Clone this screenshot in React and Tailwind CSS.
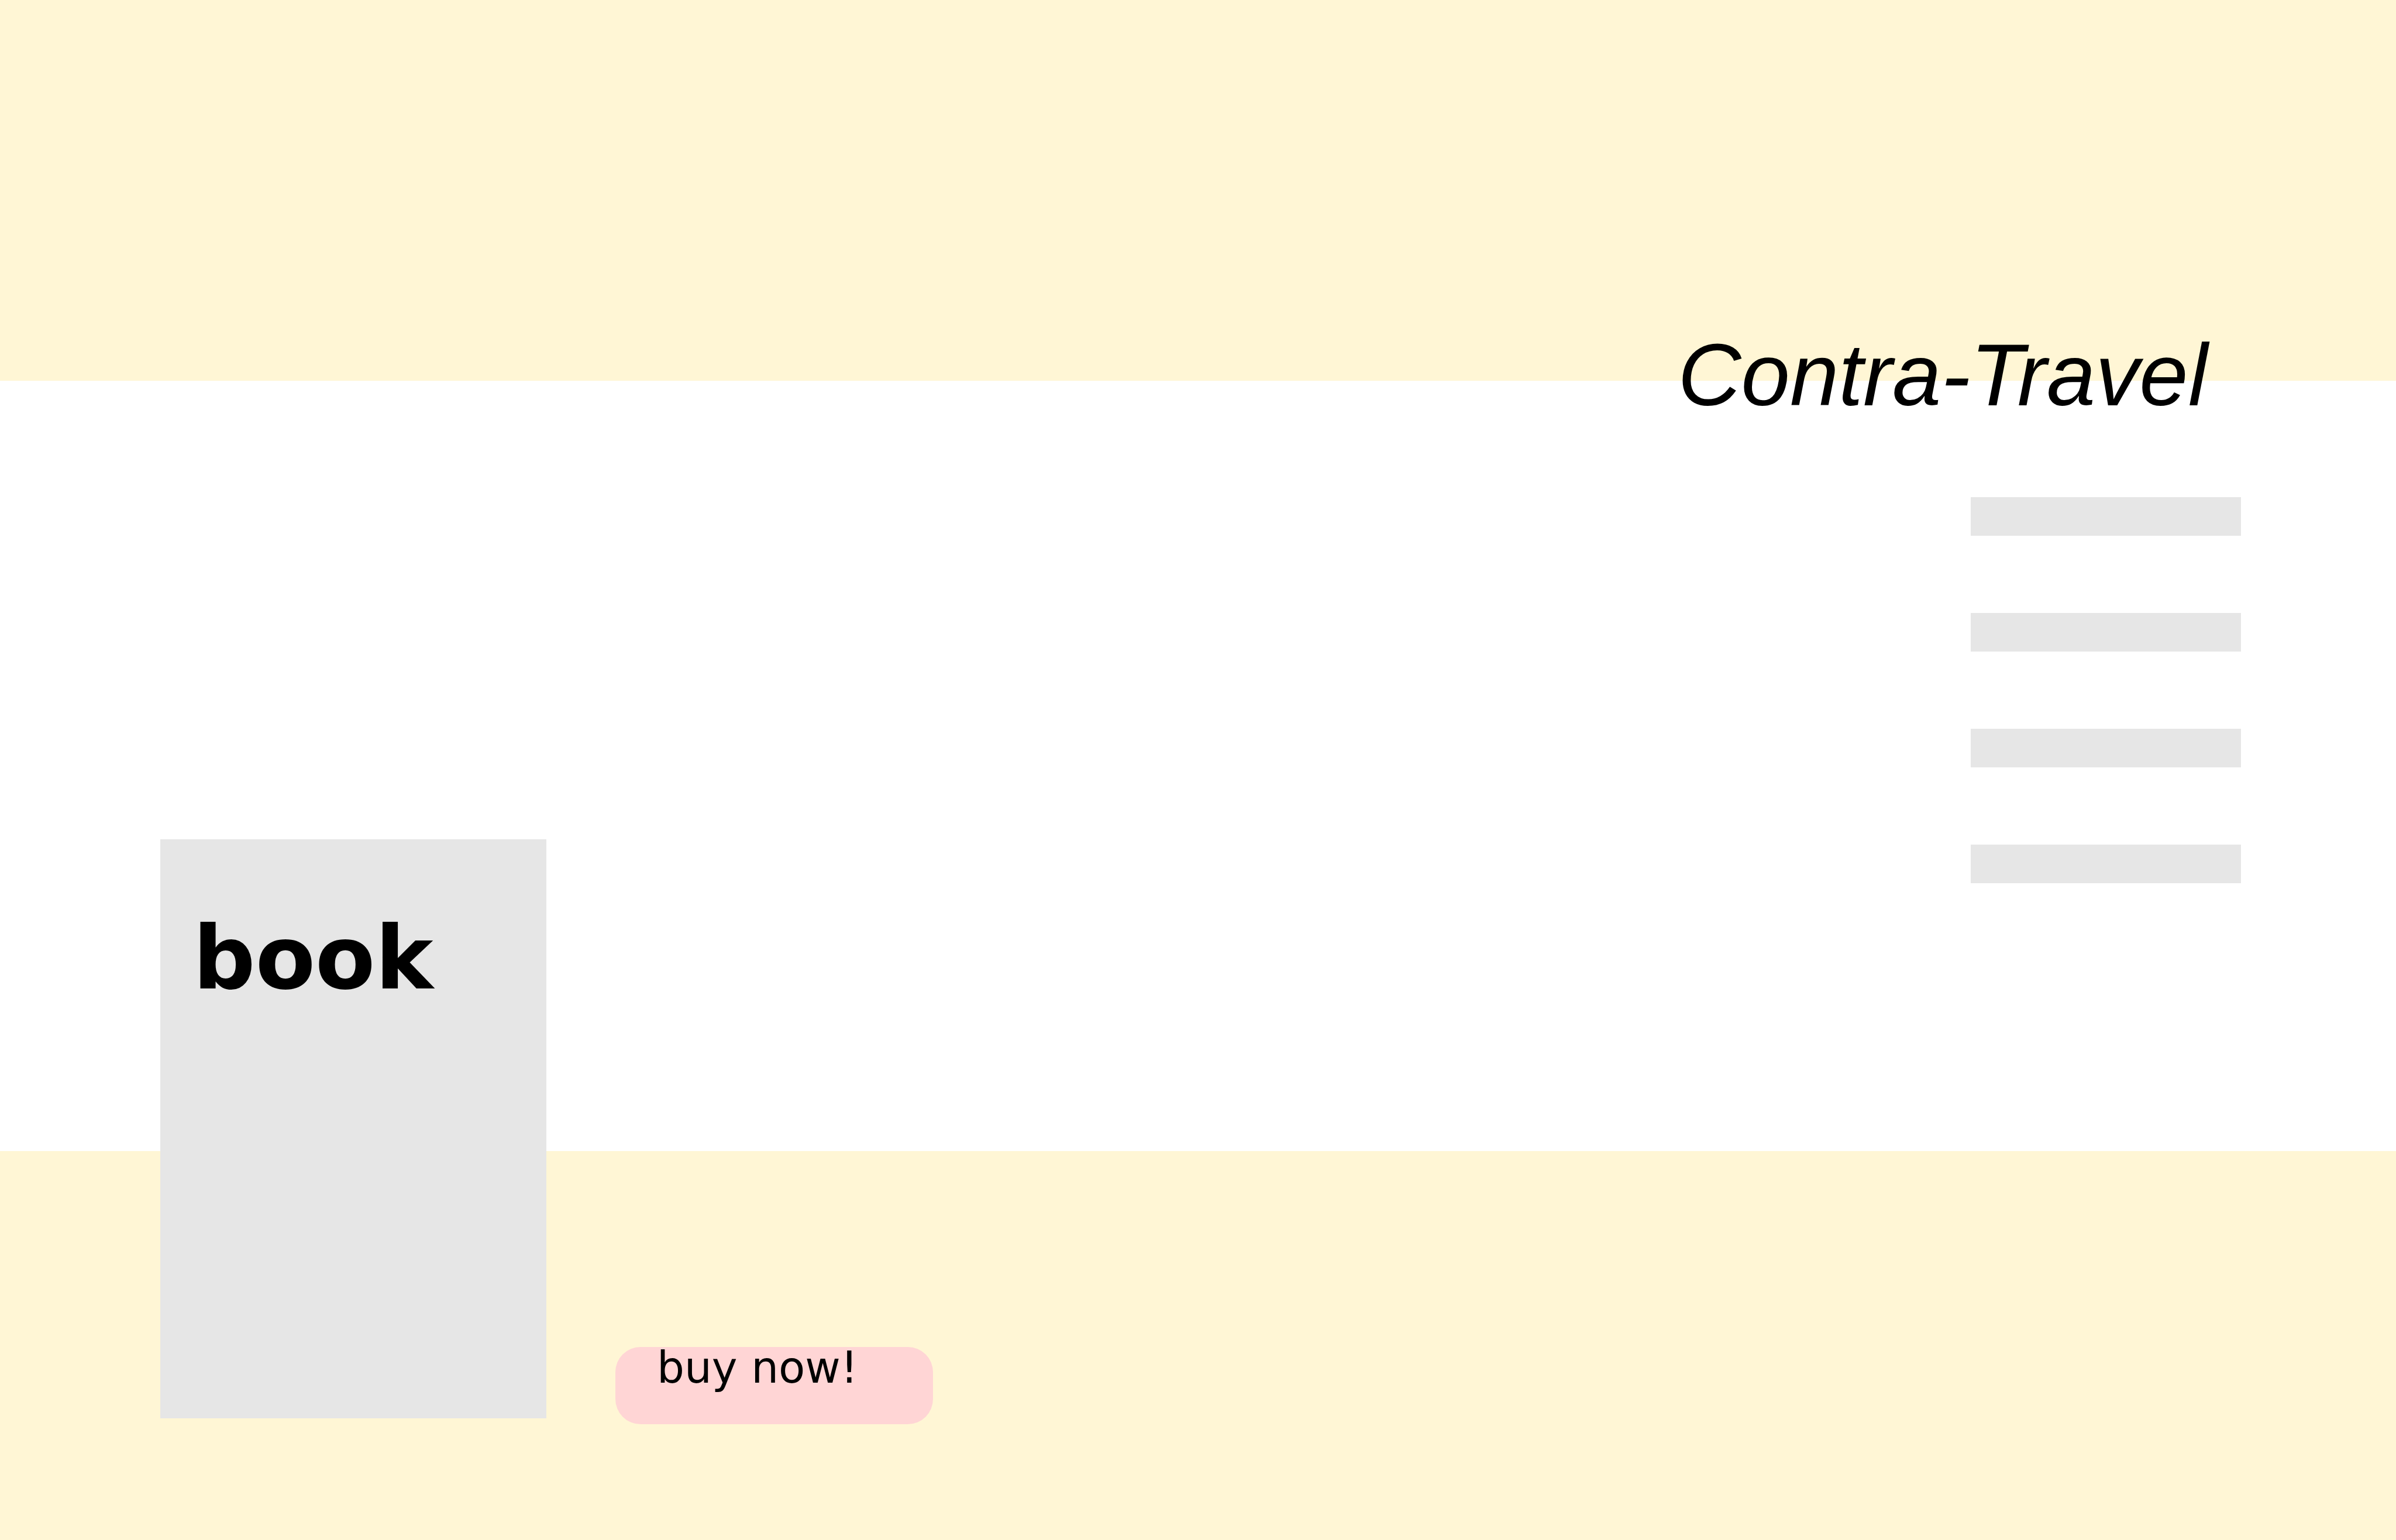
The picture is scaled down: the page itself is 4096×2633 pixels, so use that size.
const menuItems = [1, 2, 3, 4];

function BookCard() {
  return (
    <article className="mb-[10px] h-[990px] w-[660px] shrink-0 bg-[#e6e6e6] pt-[129px] pl-[56px]">
      <h2 className="font-['DejaVu_Sans',sans-serif] text-[149px] leading-[149px] font-bold">book</h2>
    </article>
  );
}

function BuyButton() {
  return (
    <button
      type="button"
      className="flex h-[132px] w-[543px] shrink-0 items-start rounded-[43px] bg-[#ffd5d5] pl-[71px] font-['DejaVu_Sans',sans-serif] text-[74px] leading-[70px] whitespace-nowrap"
    >
      buy now!
    </button>
  );
}

function SiteHeader() {
  return (
    <header className="flex flex-col items-end gap-[134px] pt-[567px]">
      <h1 className="mr-[57px] font-['Liberation_Sans',sans-serif] text-[150px] leading-[149px] whitespace-nowrap italic">
        Contra-Travel
      </h1>
      <ul className="flex flex-col gap-[132px]">
        {menuItems.map((item) => (
          <li key={item} className="h-[66px] w-[462px] bg-[#e6e6e6]" />
        ))}
      </ul>
    </header>
  );
}

export default function App() {
  return (
    <div className="grid min-h-screen grid-cols-1 grid-rows-[651px_1fr_665px] bg-white text-black">
      <div className="col-start-1 row-start-1 bg-[#fff6d5]" />
      <div className="col-start-1 row-start-3 bg-[#fff6d5]" />
      <main className="col-start-1 row-span-3 row-start-1 flex justify-between pr-[265px] pb-[198px] pl-[274px]">
        <section className="flex items-end gap-[118px]">
          <BookCard />
          <BuyButton />
        </section>
        <SiteHeader />
      </main>
    </div>
  );
}
